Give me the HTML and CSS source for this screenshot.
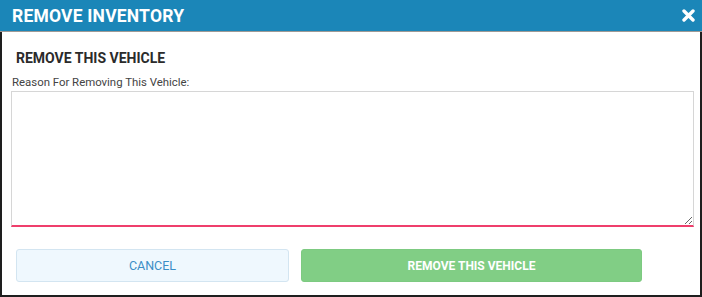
FILE: index.html
```html
<!DOCTYPE html>
<html>
<head>
    <title>Remove Inventory</title>
    <meta charset="UTF-8">
    <link rel="stylesheet" href="styles.css">
</head>
<body>
    <div class="modal">
        <div class="modal-header">
            <h1 class="modal-title">REMOVE INVENTORY</h1>
            <button class="close-button" aria-label="Close">
                <svg width="13" height="13" viewBox="0 0 13 13">
                    <path d="M2 2 L11 11 M11 2 L2 11" stroke="#fff" stroke-width="3.4" stroke-linecap="round"/>
                </svg>
            </button>
        </div>
        <div class="modal-body">
            <h2 class="section-title">REMOVE THIS VEHICLE</h2>
            <label class="field-label" for="reason-input">Reason For Removing This Vehicle:</label>
            <textarea id="reason-input" class="reason-input"></textarea>
            <div class="actions">
                <button class="btn btn-cancel">CANCEL</button>
                <button class="btn btn-remove">REMOVE THIS VEHICLE</button>
            </div>
        </div>
    </div>
</body>
</html>
```

FILE: styles.css
```css
/* Modal de baja de inventario */
body {
    margin: 0;
    font-family: Roboto, "Liberation Sans", sans-serif;
    background-color: #fff;
}

.modal {
    width: 702px;
    height: 297px;
    box-sizing: border-box;
    display: flex;
    flex-direction: column;
}

.modal-header {
    height: 31px;
    background-color: #1b86b8;
    border-bottom: 1px solid #9e9a96;
    display: flex;
    align-items: center;
    justify-content: space-between;
    padding: 0 7px 0 12px;
    flex-shrink: 0;
}

.modal-title {
    margin: 0;
    color: #fff;
    font-size: 17.5px;
    font-weight: 700;
    letter-spacing: 0.2px;
}

.close-button {
    border: none;
    background-color: transparent;
    padding: 0;
    width: 13px;
    height: 13px;
    cursor: pointer;
    display: flex;
}

.modal-body {
    flex: 1;
    border: 2px solid #1e1e1e;
    border-top: none;
    padding: 0 5px 0 9px;
    display: flex;
    flex-direction: column;
}

.section-title {
    margin: 17px 0 0 5px;
    font-size: 14px;
    font-weight: 700;
    color: #2b2b2b;
    line-height: 18px;
}

.field-label {
    margin: 8px 0 0 1px;
    font-size: 11.4px;
    color: #444;
    line-height: 14px;
}

.reason-input {
    margin-top: 2px;
    width: 683px;
    height: 136px;
    box-sizing: border-box;
    border: 1px solid #d6d6d6;
    border-bottom: 2px solid #ef3f6c;
    resize: vertical;
    font-family: Roboto, "Liberation Sans", sans-serif;
    outline: none;
}

.actions {
    display: flex;
    gap: 12px;
    margin: 22px 0 0 5px;
}

.btn {
    height: 33px;
    border-radius: 3px;
    font-family: Roboto, "Liberation Sans", sans-serif;
    font-size: 12px;
    cursor: pointer;
}

.btn-cancel {
    width: 273px;
    background-color: #eff8fe;
    border: 1px solid #d3e5f1;
    color: #3a8ec6;
    font-weight: 400;
    font-size: 12.5px;
}

.btn-remove {
    width: 341px;
    background-color: #81ce85;
    border: 1px solid #7dca81;
    color: #fff;
    font-weight: 700;
}
```
